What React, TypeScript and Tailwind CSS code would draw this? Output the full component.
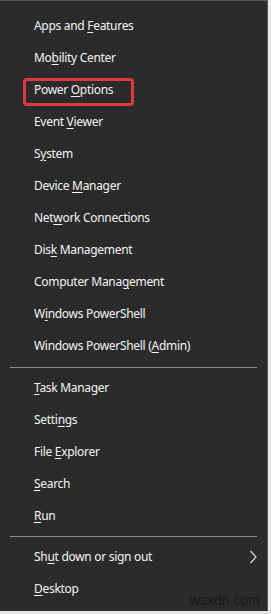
import React from "react";

type Item = { pre: string; key: string; post: string; arrow?: boolean; boxed?: boolean };

const group1: Item[] = [
  { pre: "Apps and ", key: "F", post: "eatures" },
  { pre: "Mo", key: "b", post: "ility Center" },
  { pre: "Power ", key: "O", post: "ptions", boxed: true },
  { pre: "Event ", key: "V", post: "iewer" },
  { pre: "S", key: "y", post: "stem" },
  { pre: "Device ", key: "M", post: "anager" },
  { pre: "Net", key: "w", post: "ork Connections" },
  { pre: "Dis", key: "k", post: " Management" },
  { pre: "Computer Mana", key: "g", post: "ement" },
  { pre: "W", key: "i", post: "ndows PowerShell" },
  { pre: "Windows PowerShell (", key: "A", post: "dmin)" },
];
const group2: Item[] = [
  { pre: "", key: "T", post: "ask Manager" },
  { pre: "Setti", key: "n", post: "gs" },
  { pre: "File ", key: "E", post: "xplorer" },
  { pre: "", key: "S", post: "earch" },
  { pre: "", key: "R", post: "un" },
];
const group3: Item[] = [
  { pre: "Sh", key: "u", post: "t down or sign out", arrow: true },
  { pre: "", key: "D", post: "esktop" },
];

function Row({ it }: { it: Item }) {
  return (
    <div className="relative flex h-[32px] items-center pl-[34px] pr-[10px]">
      {it.boxed && (
        <div className="pointer-events-none absolute left-[23px] top-[4px] h-[28px] w-[111px] rounded-[4px] border-[3px] border-[#dc3a3f]" />
      )}
      <span className="flex-1 whitespace-nowrap text-[12px] tracking-[-0.3px] text-[#f4f4f4]">
        {it.pre}
        <span className="underline decoration-1 underline-offset-[2px]">{it.key}</span>
        {it.post}
      </span>
      {it.arrow && (
        <svg width="8" height="14" viewBox="0 0 8 14">
          <path d="M1.5 1 L7 7 L1.5 13" fill="none" stroke="#d8d8d8" strokeWidth="1.2" />
        </svg>
      )}
    </div>
  );
}

function Sep({ h }: { h: string }) {
  return (
    <div className={`flex items-center px-[10px] ${h}`}>
      <div className="h-px w-full bg-[#8a8a8a]" />
    </div>
  );
}

export default function App() {
  return (
    <div
      className="relative h-[614px] w-[271px] overflow-hidden bg-[#e6e6e6]"
      style={{ fontFamily: '"Noto Sans", "Open Sans", sans-serif' }}
    >
      <div className="flex h-[611px] w-[268px] flex-col border-r border-t border-[#5a5a5a] bg-[#2b2b2b] pt-[9px]">
        {group1.map((it, i) => (
          <Row key={i} it={it} />
        ))}
        <Sep h="h-[10px]" />
        {group2.map((it, i) => (
          <Row key={i} it={it} />
        ))}
        <Sep h="h-[9px]" />
        {group3.map((it, i) => (
          <Row key={i} it={it} />
        ))}
      </div>
      <div
        className="absolute bottom-[7px] right-[11px] text-[14px] leading-none text-[#1a1a1a]"
        style={{ fontFamily: '"Liberation Sans", sans-serif' }}
      >
        wsxdn.com
      </div>
    </div>
  );
}
